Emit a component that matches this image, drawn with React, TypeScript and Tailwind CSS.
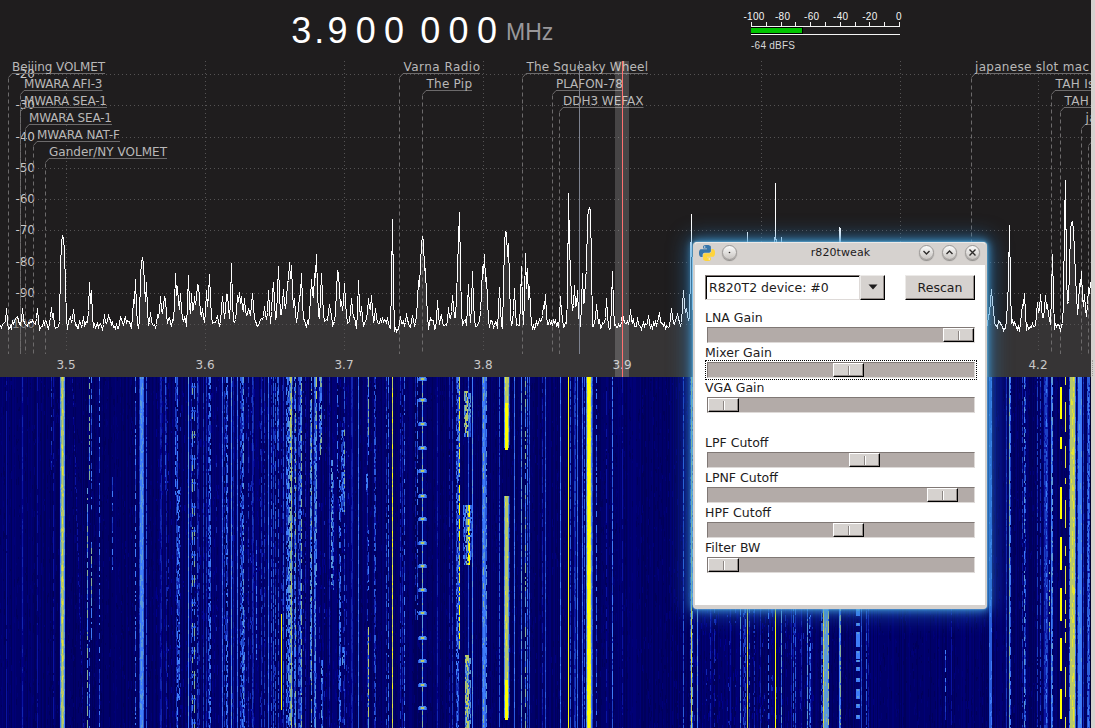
import React from 'react';

/* ---------- seeded noise ---------- */
function makeRandom(seed: number) {
  let s = seed >>> 0;
  return () => {
    s = (s + 0x6d2b79f5) >>> 0;
    let t = s;
    t = Math.imul(t ^ (t >>> 15), t | 1);
    t ^= t + Math.imul(t ^ (t >>> 7), t | 61);
    return ((t ^ (t >>> 14)) >>> 0) / 4294967296;
  };
}

/* ---------- spectrum trace ---------- */
const PEAKS: number[][] = [
  [6, 308], [15, 318], [17, 316], [22, 308], [37, 308], [51, 307], [53, 313], [60, 292, 1], [61, 250, 1.5], [62, 236, 2], [63, 238, 2], [64, 250, 1.5], [65, 290, 1],
  [70, 316], [73, 309], [83, 316], [89, 282], [91, 290], [104, 314], [108, 315], [120, 316], [125, 316], [133, 300], [135, 279],
  [140, 290, 1], [141, 265, 1.5], [142, 258, 2], [143, 262, 2], [146, 282], [150, 312], [157, 314], [160, 296, 2], [164, 296, 2], [165, 299],
  [175, 273], [177, 286, 2], [180, 293], [188, 275], [191, 293], [194, 296, 2], [197, 284, 2], [198, 285, 2], [202, 308], [206, 290], [209, 274, 2],
  [217, 315], [222, 296, 2], [226, 294], [227, 294, 2], [231, 263], [237, 295], [239, 292, 2], [241, 296], [244, 298, 2], [248, 308, 2],
  [252, 293, 2], [264, 306], [268, 290], [272, 306], [273, 282, 2], [278, 266, 2], [283, 289, 2], [287, 286, 2], [289, 262, 2], [291, 265, 2],
  [294, 298], [299, 295, 2], [301, 273], [311, 279, 2], [314, 278, 2], [316, 254, 2], [321, 273, 2], [329, 304, 2], [337, 271, 2], [338, 273, 2], [341, 301],
  [344, 283, 2], [351, 298, 2], [358, 280], [361, 306], [368, 298, 2], [371, 295, 2], [375, 308, 2], [382, 318], [392, 219], [400, 316], [406, 313],
  [412, 315], [418, 280, 2], [420, 285, 2], [421, 255, 2], [422, 236, 2], [423, 240, 2], [425, 268, 2], [437, 300], [441, 314], [448, 307], [452, 295, 2], [457, 275, 2],
  [458, 247, 1], [459, 212, 1], [460, 270, 1], [468, 284], [472, 271], [482, 268, 2], [484, 254, 2], [486, 277, 2], [499, 287, 1.5], [504, 260, 1.5],
  [505, 231, 2], [506, 232, 2], [508, 243, 2], [514, 288], [521, 266], [525, 253], [527, 268], [529, 286], [543, 305, 2], [545, 294],
  [560, 296], [568, 193, 1], [569, 245, 1], [570, 274, 2], [574, 285, 2], [577, 290], [582, 273], [585, 276, 2], [587, 230, 1], [588, 212, 2], [589, 208, 2], [590, 210, 1.5],
  [596, 304], [606, 298], [612, 271], [622, 312, 2], [630, 309], [637, 317], [648, 315], [659, 312], [671, 308], [677, 313, 2], [683, 290, 2],
  [686, 308, 2], [690, 290, 1], [691, 214, 1], [697, 290, 2], [740, 270], [747, 232, 1.5], [754, 290], [775, 183, 1], [781, 237, 1], [793, 290], [808, 276, 2],
  [825, 245, 2], [839, 227, 1.5], [840, 229, 1], [858, 285, 2], [991, 289, 3], [1009, 225, 1.3], [1008, 280, 2], [1022, 304, 2], [1024, 293, 1.5], [1037, 302],
  [1040, 294, 2], [1045, 295, 2], [1047, 305, 2], [1052, 254, 1.4], [1064, 240, 1], [1065, 180, 1.2], [1067, 303, 1.5], [1070, 240, 2], [1071, 223, 2], [1072, 221, 2],
  [1073, 230, 2], [1074, 250, 2], [1075, 280, 2], [1079, 285, 2], [1081, 271, 2], [1084, 294, 2], [1088, 288, 2], [1090, 282, 2],
];

function traceLine() {
  const rnd = makeRandom(71);
  const ys: number[] = [];
  let drift = 0;
  for (let x = 0; x <= 1090; x++) {
    drift = drift * 0.45 + (rnd() - 0.5) * 8;
    const lift = x > 160 && x < 345 ? 3 : 0;
    ys.push(Math.min(331, 324.5 - lift + drift + (rnd() - 0.5) * 5));
  }
  for (const [px, py, hw = 1.3] of PEAKS) {
    for (let x = Math.max(0, px - 3); x <= Math.min(1090, px + 3); x++) {
      const k = Math.abs(x - px) / (hw + 0.2);
      if (k < 1) ys[x] = Math.min(ys[x], ys[x] + (py - ys[x]) * (1 - k * 0.9) * (k === 0 ? 1 : 0.9));
    }
  }
  return ys.map((y, x) => `${x + 0.5},${Math.round(y) + 0.5}`).join(' ');
}
const TRACE = traceLine();

/* ---------- waterfall ---------- */
const RAMP = [
  '#00005c', '#000076', '#000088', '#0a14a0', '#1226b0', '#1c40c4', '#2a5cdc', '#3e7cf8',
  '#5a98d8', '#86b098', '#b8c868', '#e4e434', '#ffff00',
];
const TOP = 377;
const BOTTOM = 728;

/* x, width, level, density (1 = continuous), from, to */
const SIGNALS: number[][] = [
  [6, 1, 3, 0.8], [22, 1, 4, 0.8], [37, 1, 3, 0.8], [51, 1, 5, 0.3, 377, 470], [53, 1, 3, 0.6],
  [60, 1, 7, 1], [61, 1, 9, 1], [62, 1, 10, 1], [63, 1, 9, 1], [64, 1, 7, 1],
  [87, 1, 9, 0.7, 488, 728], [89, 1, 9, 0.7, 377, 480], [91, 1, 7, 0.5, 377, 510], [91, 1, 9, 0.7, 542, 640], [89, 1, 7, 0.5, 640, 728], [99, 1, 7, 0.35],
  [112, 1, 7, 0.5, 477, 570], [135, 1, 7, 0.55], [139, 1, 4, 1], [140, 1, 7, 1], [141, 2, 7, 1], [141, 2, 8, 0.55], [143, 1, 6, 1], [146, 1, 6, 0.95],
  [160, 2, 4, 0.8], [165, 1, 6, 0.8, 377, 490], [166, 1, 4, 0.7], [175, 1, 7, 0.7, 377, 495], [177, 1, 7, 0.65], [178, 2, 7, 0.45, 490, 700], [176, 1, 5, 0.7],
  [188, 1, 7, 1], [191, 1, 5, 0.7], [197, 1, 6, 0.7], [198, 1, 4, 0.7], [203, 1, 5, 0.8], [206, 1, 5, 0.9], [208, 1, 6, 0.4], [209, 2, 7, 0.55],
  [222, 1, 6, 1], [224, 1, 5, 0.5], [226, 2, 7, 0.5], [231, 1, 7, 1], [233, 1, 3, 1], [237, 1, 6, 1], [240, 2, 6, 0.5], [242, 1, 7, 0.6], [243, 1, 8, 0.6], [244, 1, 7, 0.5, 610, 728],
  [248, 1, 5, 0.4], [252, 1, 5, 0.8], [253, 1, 4, 0.8], [256, 1, 7, 0.5, 540, 660], [261, 1, 5, 0.6], [264, 1, 5, 0.5], [268, 1, 6, 1],
  [271, 1, 6, 0.7], [273, 1, 6, 0.9], [275, 1, 6, 0.7], [277, 2, 7, 0.6, 377, 450], [278, 1, 6, 0.5], [283, 1, 6, 0.9], [281, 1, 12, 1, 614, 710],
  [286, 1, 7, 0.5], [287, 1, 7, 0.5], [288, 2, 8, 0.6], [290, 1, 10, 0.65, 377, 450], [290, 1, 9, 0.6], [291, 1, 9, 1], [292, 1, 6, 0.5], [294, 2, 7, 0.6], [295, 1, 9, 0.35],
  [298, 2, 6, 0.6], [300, 1, 7, 0.8], [301, 1, 9, 0.6], [305, 1, 4, 0.6], [310, 2, 8, 0.7, 400, 680], [311, 1, 9, 0.3],
  [314, 1, 7, 0.8], [315, 1, 8, 0.8], [316, 1, 10, 0.65, 377, 435], [316, 1, 8, 0.6, 435, 585], [319, 1, 7, 0.5, 377, 460], [320, 2, 9, 0.6, 377, 455], [321, 2, 8, 0.6, 660, 728],
  [329, 1, 4, 0.9], [331, 2, 8, 0.6, 460, 585], [333, 1, 6, 0.6, 480, 590], [337, 1, 7, 0.5, 377, 480], [339, 2, 7, 0.5, 480, 728], [339, 1, 7, 0.9, 586, 728],
  [341, 3, 7, 0.65, 430, 512], [344, 1, 9, 0.6, 430, 512], [342, 3, 8, 0.7, 647, 667], [344, 1, 6, 0.5], [351, 2, 4, 0.95], [358, 1, 6, 1],
  [366, 2, 7, 0.6, 474, 492], [368, 1, 9, 0.7, 377, 455], [368, 1, 7, 0.6, 530, 590], [368, 1, 10, 0.8, 627, 728], [367, 1, 5, 0.4], [374, 2, 6, 0.5],
  [386, 1, 6, 0.5], [388, 1, 7, 0.55], [392, 1, 10, 1], [392, 1, 12, 0.3], [400, 1, 5, 0.45], [402, 1, 4, 0.4], [404, 1, 7, 0.5],
  [415, 1, 5, 0.4, 377, 620], [417, 1, 7, 0.5, 377, 620], [422, 1, 7, 1], [422, 1, 9, 0.3], [437, 1, 4, 0.8], [449, 1, 4, 0.6], [452, 1, 5, 0.8],
  [456, 1, 7, 0.4], [457, 2, 7, 0.6], [459, 1, 11, 0.8, 377, 477], [459, 1, 12, 0.85, 485, 650],
  [464, 1, 9, 0.7, 391, 437], [465, 3, 10, 0.75, 391, 437], [468, 3, 8, 0.65, 393, 437], [463, 3, 7, 0.65, 505, 565], [466, 2, 9, 0.7, 505, 565], [468, 2, 12, 0.85, 505, 565], [470, 2, 7, 0.6, 505, 560],
  [465, 4, 10, 0.8, 655, 728], [469, 2, 8, 0.6, 658, 728], [468, 1, 5, 1], [472, 1, 7, 1],
  [482, 1, 6, 1], [483, 2, 7, 1], [483, 1, 9, 0.5], [485, 1, 6, 1], [486, 1, 8, 0.6], [499, 1, 6, 0.9],
  [504, 1, 7, 1, 377, 448], [505, 3, 10, 1, 377, 403], [505, 3, 12, 1, 403, 450], [508, 1, 9, 1, 377, 448], [509, 1, 4, 1, 377, 445],
  [504, 1, 7, 1, 496, 718], [505, 3, 10, 1, 496, 680], [505, 3, 9, 0.4, 496, 676], [505, 3, 12, 1, 680, 720], [508, 1, 8, 1, 496, 718], [509, 1, 5, 0.8, 496, 710],
  [514, 1, 6, 1], [521, 1, 8, 0.9], [525, 1, 9, 0.65], [527, 1, 7, 0.9], [529, 1, 5, 1], [542, 1, 4, 0.6], [545, 1, 5, 1], [560, 1, 6, 1], [568, 1, 12, 1], [570, 1, 6, 0.9],
  [574, 2, 5, 0.8], [577, 1, 6, 1], [582, 1, 6, 1], [584, 1, 6, 0.7], [586, 1, 7, 1], [587, 1, 11, 1], [588, 2, 12, 1], [590, 1, 11, 1], [591, 1, 7, 1], [592, 1, 5, 1], [596, 1, 7, 0.5],
  [606, 1, 3, 0.7], [612, 1, 7, 0.95], [622, 1, 3, 0.8], [683, 1, 6, 0.9], [690, 1, 6, 0.8], [691, 1, 10, 1], [692, 1, 8, 0.6], [697, 1, 7, 1], [710, 1, 4, 0.5], [714, 1, 4, 0.5], [730, 1, 3, 0.8],
  [740, 1, 8, 0.9], [743, 2, 5, 0.5], [745, 1, 6, 0.5], [747, 1, 10, 1], [749, 1, 6, 0.5], [754, 1, 5, 0.7], [760, 1, 4, 0.8], [768, 1, 7, 0.6], [775, 1, 12, 1], [781, 1, 8, 0.9],
  [791, 1, 5, 0.8], [793, 1, 6, 0.6], [795, 1, 6, 0.8], [801, 1, 4, 0.8], [807, 1, 8, 0.9], [809, 2, 7, 0.5], [821, 2, 6, 0.6], [823, 1, 10, 1], [824, 4, 8, 1], [828, 1, 10, 0.8],
  [839, 1, 7, 1], [840, 1, 9, 0.8], [861, 1, 5, 1], [866, 1, 6, 0.7], [868, 1, 4, 0.8], [945, 1, 7, 0.5, 650, 720], [951, 1, 3, 0.8],
  [989, 3, 6, 1], [991, 1, 7, 0.5], [1006, 1, 4, 1], [1009, 1, 8, 1], [1010, 1, 7, 0.7], [1022, 1, 5, 0.5], [1024, 1, 8, 0.5], [1025, 1, 6, 0.5], [1037, 1, 5, 0.7], [1040, 1, 5, 0.7],
  [1044, 4, 5, 0.9], [1046, 1, 7, 0.5], [1051, 1, 7, 1], [1052, 1, 8, 0.6], [1049, 1, 9, 0.4, 560, 640],
  [1070, 5, 10, 1], [1070, 1, 9, 0.6], [1072, 2, 11, 0.55], [1069, 1, 7, 0.8], [1075, 1, 6, 1], [1077, 1, 5, 0.8], [1078, 4, 7, 1], [1080, 2, 6, 0.6], [1083, 1, 4, 1], [1087, 3, 6, 0.9], [1088, 1, 7, 0.7],
];

function buildWaterfall() {
  const rnd = makeRandom(2024);
  const d: string[][] = RAMP.map(() => []);
  const put = (lv: number, x: number, y: number, w: number, h: number) => {
    if (h <= 0) return;
    const level = Math.max(0, Math.min(RAMP.length - 1, Math.round(lv)));
    d[level].push(`M${x} ${y}h${w}v${h}h${-w}z`);
  };
  /* receiver noise floor */
  for (let x = 0; x < 1091; x++) {
    const busy = (x > 155 && x < 350) || (x > 690 && x < 815);
    const r = rnd();
    if (r < 0.3) put(0, x, TOP, 1, BOTTOM - TOP);
    else if (r > (busy ? 0.72 : 0.86)) put(1, x, TOP, 1, BOTTOM - TOP);
    const n = busy ? 11 : 9;
    for (let i = 0; i < n; i++) {
      put(rnd() < 0.55 ? 0 : busy ? 2 : 1, x, TOP + 2 * Math.floor(rnd() * 175), 1, 2 + 2 * Math.floor(rnd() * 4));
    }
    if (busy && rnd() < 0.25) {
      for (let i = 0; i < 8; i++) put(4, x, TOP + 2 * Math.floor(rnd() * 173), 1, 2 + 2 * Math.floor(rnd() * 3));
    }
  }
  /* stations */
  for (const [x, w, lv, dens, from = TOP, to = BOTTOM] of SIGNALS) {
    if (dens === 1) {
      put(lv, x, from, w, to - from);
      if (lv < 12) {
        for (let y = from; y < to - 6; y += 4 + Math.floor(rnd() * 20)) put(lv + 1, x + Math.floor(rnd() * w), y, 1, 2 + 2 * Math.floor(rnd() * 3));
      }
      continue;
    }
    for (let c = 0; c < w; c++) {
      let y = from;
      while (y < to) {
        const on = 2 + 2 * Math.floor(rnd() * 7 * dens);
        const off = 2 * Math.ceil(rnd() * 7 * (1 - dens));
        const h = Math.min(on, to - y);
        put(lv - (rnd() < 0.4 ? 1 + Math.floor(rnd() * 2) : 0), x + c, y, 1, h);
        if (dens > 0.75 || rnd() < 0.5) put(Math.max(3, Math.min(lv - 3, 6)), x + c, y + h, 1, Math.min(off, to - y - h));
        y += on + off;
      }
    }
  }
  /* keyed bursts */
  const pip = [377, 398, 422, 446, 469, 494, 517, 541, 564, 588, 611, 636, 659, 683, 706];
  for (const y of pip) {
    put(6, 418, y + 1, 9, 3);
    put(7, 419, y, 7, 4);
    put(8, 420, y + 1, 2, 2);
    put(8, 424, y, 1, 3);
    put(10, 421, y + 1, 3, 2);
  }
  for (let y = 386; y < 726; y += 24) {
    for (let k = 0; k < 6; k++) {
      const h = 2 + 2 * Math.floor(rnd() * 4);
      put(rnd() < 0.25 ? 9 : 7, 192 + 2 * (k % 2), y + Math.floor(k / 2) * 5 - 3, 1, h);
    }
    put(5, 191, y, 5, 2);
  }
  for (let y = TOP; y < BOTTOM; y += 2) {
    const drift = 72 + Math.round(((y - TOP) * 11) / 350);
    if (rnd() < 0.75) put(rnd() < 0.5 ? 2 : 3, drift, y, 1, 2);
  }
  [[609, 7], [623, 3], [632, 15], [651, 8], [660, 2], [667, 4], [678, 4], [689, 7], [696, 3], [704, 4], [715, 4]].forEach(([y, h]) => {
    put(7, 856, y, 4, h);
    put(8, 857, y, 2, 2);
  });
  [[387, 32], [437, 12], [487, 32], [537, 33], [588, 33], [638, 33], [689, 30]].forEach(([y, h]) => put(12, 1060, y, 2, h));
  [[377, 8], [402, 30], [446, 22], [478, 6], [500, 28], [546, 10], [566, 28], [600, 14], [619, 9], [632, 11], [667, 30], [717, 11]].forEach(([y, h]) => put(11, 1065, y, 1, h));
  return d.map((p) => p.join(''));
}
const WATERFALL = buildWaterfall();

/* ---------- spectrum annotations ---------- */
type Bookmark = { name: string; x: number; stem: number; row: number; end: number; fit?: boolean };
const BOOKMARKS: Bookmark[] = [
  { name: 'Beijing VOLMET', x: 12, stem: 8.5, row: 0, end: 105, fit: true },
  { name: 'MWARA AFI-3', x: 24, stem: 20.5, row: 1, end: 102.5, fit: true },
  { name: 'MWARA SEA-1', x: 24, stem: 20.5, row: 2, end: 107, fit: true },
  { name: 'MWARA SEA-1', x: 29, stem: 25.5, row: 3, end: 112, fit: true },
  { name: 'MWARA NAT-F', x: 37, stem: 33.5, row: 4, end: 120, fit: true },
  { name: 'Gander/NY VOLMET', x: 49, stem: 45.5, row: 5, end: 167, fit: true },
  { name: 'Varna Radio', x: 403.5, stem: 399.5, row: 0, end: 480, fit: true },
  { name: 'The Pip', x: 426.5, stem: 422.5, row: 1, end: 472, fit: true },
  { name: 'The Squeaky Wheel', x: 526.5, stem: 522.5, row: 0, end: 648, fit: true },
  { name: 'PLAFON-78', x: 556, stem: 552.5, row: 1, end: 623, fit: true },
  { name: 'DDH3 WEFAX', x: 563, stem: 559.5, row: 2, end: 643.5, fit: true },
  { name: 'japanese slot mac', x: 975, stem: 971.5, row: 0, end: 1091 },
  { name: 'TAH Is', x: 1055.5, stem: 1051.5, row: 1, end: 1091 },
  { name: 'TAH', x: 1064.5, stem: 1060.5, row: 2, end: 1091 },
  { name: 'ja', x: 1085.5, stem: 1081.5, row: 3, end: 1091 },
  { name: '', x: 1091, stem: 1088.5, row: 4, end: 1091 },
];
const DB_LINES = [74, 105, 137, 168, 199, 230, 262, 293, 324];
const FREQS: [string, number][] = [['3.5', 66], ['3.6', 205], ['3.7', 344], ['3.8', 483], ['3.9', 622], ['4.0', 761], ['4.1', 900], ['4.2', 1038]];

function Spectrum() {
  return (
    <svg width="1091" height="316" viewBox="0 61 1091 316" className="block shrink-0 font-['DejaVu_Sans',sans-serif] text-[12px]">
      <polygon points={`0,377 0,326 ${TRACE} 1091,326 1091,377`} fill="#363435" />
      <g stroke="#555354" strokeDasharray="1 3" shapeRendering="crispEdges">
        {DB_LINES.map((y) => <line key={y} x1="38" x2="1091" y1={y + 0.5} y2={y + 0.5} />)}
        {FREQS.map(([f, x]) => <line key={f} x1={x + 0.5} x2={x + 0.5} y1="61" y2="353" />)}
      </g>
      <g fill="#c9c8c8">
        {DB_LINES.map((y, i) => (
          <text key={y} x="35" y={y + 4} textAnchor="end" fillOpacity={i === 8 ? 0.6 : 1}>{`-${(i + 2) * 10}`}</text>
        ))}
        {FREQS.map(([f, x]) => <text key={f} x={x} y="369" textAnchor="middle">{f}</text>)}
      </g>
      <g fill="none" stroke="#6c6a6b">
        {BOOKMARKS.map((b, i) => {
          const y = 73.5 + b.row * 17;
          return (
            <g key={i}>
              <path d={`M${b.end} ${y}H${b.stem + 3.5}L${b.stem} ${y + 4}`} />
              <path d={`M${b.stem} ${y + 5}V354`} strokeDasharray="4 3" />
              <text x={b.x} y={y - 2.5} fill="#b9b8b8" stroke="none" letterSpacing={b.fit ? undefined : 0.3} textLength={b.fit ? b.end - b.x : undefined}>{b.name}</text>
            </g>
          );
        })}
      </g>
      <rect x="615" y="61" width="14" height="316" fill="#ffffff" fillOpacity="0.18" />
      <polyline points={TRACE} fill="none" stroke="#ffffff" strokeWidth="1" shapeRendering="crispEdges" />
      <rect x="579" y="61" width="1" height="293" fill="#7d8290" />
      <rect x="622" y="61" width="1" height="316" fill="#ff7070" />
    </svg>
  );
}

function Waterfall() {
  return (
    <svg width="1091" height="351" viewBox="0 377 1091 351" shapeRendering="crispEdges" className="block shrink-0 bg-[#00006a]">
      {WATERFALL.map((d, i) => <path key={i} d={d} fill={RAMP[i]} />)}
      <rect x="1090" y="377" width="1" height="351" fill="#000030" />
    </svg>
  );
}

function Meter() {
  return (
    <svg width="170" height="50" viewBox="740 5 170 50" className="mt-[5px] ml-auto mr-[181px] block font-['Liberation_Sans',sans-serif] text-[10px]">
      <g fill="#f4f4f4">
        {['-100', '-80', '-60', '-40', '-20', '0'].map((t, i) => (
          <text key={t} x={i === 0 ? 754 : 753.5 + i * 29.1} y="20" textAnchor="middle" letterSpacing="0.3">{t}</text>
        ))}
        {Array.from({ length: 11 }, (_, i) => <rect key={i} x={751 + Math.round(i * 14.8)} y={22} width="1" height="4" />)}
        <rect x="751" y="26" width="149" height="1" />
        <rect x="751" y="34" width="149" height="1" />
      </g>
      <rect x="751" y="27" width="52" height="7" fill="#000000" />
      <rect x="751" y="28" width="51" height="5" fill="#00c400" />
      <text x="751" y="49" fill="#d8d8d8" letterSpacing="0.25">-64 dBFS</text>
    </svg>
  );
}

function Header() {
  return (
    <div className="flex h-[61px] shrink-0 items-start font-['Liberation_Sans',sans-serif]">
      <div className="ml-[287px] mt-[11px] flex h-[40px] items-baseline text-[36px] leading-[40px] text-white">
        {'3.900 000'.split('').map((c, i) => (
          <span key={i} className={c === '.' || c === ' ' ? 'w-[8px] whitespace-pre text-center -indent-px' : 'w-[28.3px] text-center'}>{c}</span>
        ))}
        <span className="ml-[5px] text-[23px] text-[#99979a] -translate-y-[3px]">MHz</span>
      </div>
      <Meter />
    </div>
  );
}

/* ---------- tuner dialog ---------- */
function PythonLogo() {
  const half = 'M14.25.18l.9.2.73.26.59.3.45.32.34.34.25.34.16.33.1.3.04.26.02.2-.01.13V8.5l-.05.63-.13.55-.21.46-.26.38-.3.31-.33.25-.35.19-.35.14-.33.1-.3.07-.26.04-.21.02H8.77l-.69.05-.59.14-.5.22-.41.27-.33.32-.27.35-.2.36-.15.37-.1.35-.07.32-.04.27-.02.21v3.06H3.17l-.21-.03-.28-.07-.32-.12-.35-.18-.36-.26-.36-.36-.35-.46-.32-.59-.28-.73-.21-.88-.14-1.05-.05-1.23.06-1.22.16-1.04.24-.87.32-.71.36-.57.4-.44.42-.33.42-.24.4-.16.36-.1.32-.05.24-.01h.16l.06.01h8.16v-.83H6.18l-.01-2.75-.02-.37.05-.34.11-.31.17-.28.25-.26.31-.23.38-.2.44-.18.51-.15.58-.12.64-.1.71-.06.77-.04.84-.02 1.27.05z';
  return (
    <svg width="16" height="16" viewBox="0 0 24 24">
      <path d={half} fill="#3775a9" />
      <path d={half} fill="#ffd43b" transform="rotate(180 12 12)" />
      <circle cx="8.6" cy="3" r="1.1" fill="#e8f0f6" />
      <circle cx="15.4" cy="21" r="1.1" fill="#fffbe8" />
    </svg>
  );
}

function RoundButton({ d, dot }: { d?: string; dot?: boolean }) {
  return (
    <span className="flex size-[15px] items-center justify-center rounded-full border border-[#9c9997] bg-linear-to-b from-[#fbfbfa] to-[#c9c5c2] shadow-[0_1px_1px_rgba(0,0,0,0.35)]">
      <svg width="13" height="13" viewBox="0 0 13 13" fill="none" stroke="#2e2c2b" strokeWidth="1.4">
        {dot ? <circle cx="6.5" cy="6.5" r="0.8" fill="#2e2c2b" stroke="none" /> : <path d={d} />}
      </svg>
    </span>
  );
}

function Slider({ label, pos, focused }: { label: string; pos: string; focused?: boolean }) {
  return (
    <div className="flex h-[35px] flex-col">
      <div className="h-[14px] whitespace-nowrap pt-px leading-[14px]">{label}</div>
      <div className={`mt-px -mr-[2px] h-[20px] border border-dotted ${focused ? 'border-black' : 'border-transparent'} px-px pt-px`}>
        <div className="h-[16px] w-[268px] border border-t-[#807875] border-l-[#807875] border-r-[#dedad8] border-b-[#dedad8] bg-[#b3aba8]">
          <div className={`flex h-[14px] w-[31px] items-center justify-center border border-t-white border-l-white border-r-black border-b-black bg-[#d6d2cf] shadow-[inset_-1px_-1px_0_#918a87] ${pos}`}>
            <div className="h-[9px] w-[2px] border-l border-l-[#8b8582] border-r border-r-white" />
          </div>
        </div>
      </div>
    </div>
  );
}

function TunerDialog() {
  return (
    <div className="absolute left-[693px] top-[242px] flex h-[367px] w-[294px] flex-col rounded-[4px] border-x-2 border-b-4 border-[#d6d2cf] bg-white font-['DejaVu_Sans',sans-serif] text-[12.5px] text-[#1d1b1c] shadow-[0_0_2px_0_#8fd0f2,0_0_7px_2px_rgba(74,170,228,0.7),0_0_20px_5px_rgba(44,128,196,0.6)]">
      <div className="flex h-[23px] shrink-0 items-center rounded-t-[3px] border-t border-t-[#eceae8] bg-[#d6d2cf] pb-[3px] pl-[4px] pr-[5px] text-[11px]">
        <PythonLogo />
        <div className="ml-[7px]"><RoundButton dot /></div>
        <div className="flex-1 pl-[25px] pt-[2px] text-center tracking-[0.1px]">r820tweak</div>
        <div className="flex gap-[8px]">
          <RoundButton d="M3.5 5l3 3 3-3" />
          <RoundButton d="M3.5 8l3-3 3 3" />
          <RoundButton d="M3.5 3.5l6 6M9.5 3.5l-6 6" />
        </div>
      </div>
      <div className="flex flex-1 flex-col px-[10px] pt-[10px]">
        <div className="flex h-[25px] shrink-0">
          <div className="flex w-[155px] items-center whitespace-nowrap border border-t-[#807875] border-l-[#807875] border-r-[#dedad8] border-b-[#dedad8] pl-[3px] pt-px shadow-[inset_1px_1px_0_#000]">R820T2 device: #0</div>
          <div className="flex w-[25px] justify-center border border-t-[#eceae8] border-l-[#eceae8] border-r-black border-b-black bg-[#d6d2cf] pt-[8px] shadow-[inset_-1px_-1px_0_#918a87]">
            <svg width="10" height="6" viewBox="0 0 10 6"><path d="M.5.5h9L5 5.5z" fill="#1d1b1c" /></svg>
          </div>
          <div className="ml-auto flex w-[70px] items-center justify-center border border-t-[#eceae8] border-l-[#eceae8] border-r-black border-b-black bg-[#d6d2cf] pt-px shadow-[inset_-1px_-1px_0_#918a87]">Rescan</div>
        </div>
        <div className="mt-[10px]">
          <Slider label="LNA Gain" pos="ml-[235px]" />
          <Slider label="Mixer Gain" pos="ml-[125px]" focused />
          <Slider label="VGA Gain" pos="ml-0" />
        </div>
        <div className="mt-[20px]">
          <Slider label="LPF Cutoff" pos="ml-[141px]" />
          <Slider label="LPNF Cutoff" pos="ml-[219px]" />
          <Slider label="HPF Cutoff" pos="ml-[125px]" />
          <Slider label="Filter BW" pos="ml-0" />
        </div>
      </div>
    </div>
  );
}

export default function App() {
  return (
    <div className="relative flex h-[728px] w-[1095px] overflow-hidden bg-[#1f1d1e]">
      <div className="flex w-[1091px] shrink-0 flex-col">
        <Header />
        <Spectrum />
        <Waterfall />
      </div>
      <div className="flex-1 bg-[#d6d2cf] pt-[360px]">
        <div className="ml-px h-[16px] border-l border-dotted border-[#a29c99]" />
      </div>
      <TunerDialog />
    </div>
  );
}
